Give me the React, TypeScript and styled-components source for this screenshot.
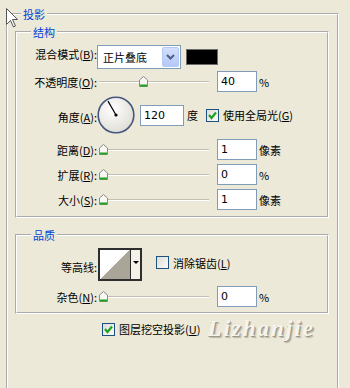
import styled, { createGlobalStyle } from 'styled-components';

const GlobalStyle = createGlobalStyle`
  html, body {
    margin: 0;
    padding: 0;
  }
  body {
    background: #ece9d8;
    font-family: "Noto Sans CJK SC", "DejaVu Sans", sans-serif;
    font-size: 11px;
    color: #000;
  }
`;

function Check({ checked }: { checked?: boolean }) {
  return (
    <CheckBox>
      {checked && (
        <svg width="11" height="11" viewBox="0 0 11 11">
          <polyline points="2,5 4.5,8 9,2.5" fill="none" stroke="#21a121" strokeWidth="2.2" />
        </svg>
      )}
    </CheckBox>
  );
}

function Slider({ value }: { value: number }) {
  return (
    <SliderWrap>
      <Track />
      <Thumb style={{ left: `calc((100% - 9px) * ${value})` }}>
        <svg width="9" height="11" viewBox="0 0 9 11">
          <path d="M4.5 0.5 L8.5 4 L8.5 10.5 L0.5 10.5 L0.5 4 Z" fill="#f7f7f4" stroke="#8a8a8a" />
          <rect x="1" y="8.5" width="7" height="2" fill="#21a121" />
        </svg>
      </Thumb>
    </SliderWrap>
  );
}

function AngleDial({ angle }: { angle: number }) {
  const r = (angle * Math.PI) / 180;
  const x = 19 + 16 * Math.cos(r);
  const y = 19 - 16 * Math.sin(r);
  return (
    <svg width="38" height="38" viewBox="0 0 38 38">
      <defs>
        <radialGradient id="dialFill" cx="40%" cy="35%" r="70%">
          <stop offset="0%" stopColor="#ffffff" />
          <stop offset="100%" stopColor="#dedcd4" />
        </radialGradient>
      </defs>
      <circle cx="19" cy="19" r="17.8" fill="url(#dialFill)" stroke="#45557d" strokeWidth="1.6" />
      <line x1="19" y1="19" x2={x} y2={y} stroke="#000" strokeWidth="1.2" />
      <circle cx="19" cy="19" r="1.6" fill="#000" />
    </svg>
  );
}

export default function App() {
  return (
    <>
      <GlobalStyle />
      <Page>
        <OuterGroup>
          <Legend $indent={6}>投影</Legend>
          <Section $top={4} $bottom={6}>
            <Legend $indent={10}>结构</Legend>
            <Row $h={26}>
              <Label $lift={6}>混合模式(<u>B</u>):</Label>
              <Combo>
                <ComboText>正片叠底</ComboText>
                <ComboButton>
                  <svg width="9" height="6" viewBox="0 0 9 6">
                    <polyline points="1,1 4.5,4.5 8,1" fill="none" stroke="#4d6185" strokeWidth="2" />
                  </svg>
                </ComboButton>
              </Combo>
              <Swatch />
            </Row>
            <Row $h={21} $gap={1}>
              <Label>不透明度(<u>O</u>):</Label>
              <Slider value={0.4} />
              <Field>40</Field>
              <Unit>%</Unit>
            </Row>
            <Row $h={40} $gap={3}>
              <Label $lift={-3}>角度(<u>A</u>):</Label>
              <AngleDial angle={120} />
              <Field $w={44} $ml={5}>120</Field>
              <Unit $ml={3}>度</Unit>
              <CheckLabel $ml={8}>
                <Check checked />
                <span>使用全局光(<u>G</u>)</span>
              </CheckLabel>
            </Row>
            <Row $h={21} $gap={4}>
              <Label>距离(<u>D</u>):</Label>
              <Slider value={0} />
              <Field>1</Field>
              <Unit>像素</Unit>
            </Row>
            <Row $h={21} $gap={4}>
              <Label>扩展(<u>R</u>):</Label>
              <Slider value={0} />
              <Field>0</Field>
              <Unit>%</Unit>
            </Row>
            <Row $h={21} $gap={4}>
              <Label>大小(<u>S</u>):</Label>
              <Slider value={0} />
              <Field>1</Field>
              <Unit>像素</Unit>
            </Row>
          </Section>

          <Section $top={5} $bottom={5} $gap={9}>
            <Legend $indent={10}>品质</Legend>
            <Row $h={33}>
              <Label $lift={-5}>等高线:</Label>
              <ContourBox>
                <ContourPreview />
                <ContourButton>
                  <Arrow />
                </ContourButton>
              </ContourBox>
              <CheckLabel $ml={14} $lift={4}>
                <Check />
                <span>消除锯齿(<u>L</u>)</span>
              </CheckLabel>
            </Row>
            <Row $h={21} $gap={5}>
              <Label>杂色(<u>N</u>):</Label>
              <Slider value={0} />
              <Field>0</Field>
              <Unit>%</Unit>
            </Row>
          </Section>

          <BottomRow>
            <CheckLabel>
              <Check checked />
              <span>图层挖空投影(<u>U</u>)</span>
            </CheckLabel>
            <Watermark>Lizhanjie</Watermark>
          </BottomRow>
        </OuterGroup>

        <Cursor width="13" height="20" viewBox="0 0 13 20">
          <path d="M0.5 0.5 L0.5 16.5 L4.5 12.5 L7.5 19 L9.5 18 L6.5 11.5 L11.5 11.5 Z" fill="#fff" stroke="#555" strokeWidth="1" />
        </Cursor>
      </Page>
    </>
  );
}

const Page = styled.div`
  position: relative;
  width: 350px;
  height: 388px;
  overflow: hidden;
  box-sizing: border-box;
  padding: 6px 0 0 6px;
  background: #ece9d8;
`;

const OuterGroup = styled.fieldset`
  margin: 0;
  min-width: 0;
  width: 333px;
  height: 430px;
  box-sizing: border-box;
  border: 2px groove #fff;
  padding: 2px 8px 0 7px;
`;

const Section = styled.fieldset<{ $top: number; $bottom: number; $gap?: number }>`
  margin: ${(p) => p.$gap ?? 0}px 0 0 0;
  min-width: 0;
  box-sizing: border-box;
  border: 2px groove #fff;
  padding: ${(p) => p.$top}px 4px ${(p) => p.$bottom}px 4px;
`;

const Legend = styled.legend<{ $indent: number }>`
  margin-left: ${(p) => p.$indent}px;
  padding: 0 2px;
  line-height: 16px;
  font-size: 11px;
  color: #0046d5;
`;

const Row = styled.div<{ $h: number; $gap?: number }>`
  display: flex;
  align-items: center;
  height: ${(p) => p.$h}px;
  margin-top: ${(p) => p.$gap ?? 0}px;
`;

const Label = styled.div<{ $lift?: number }>`
  flex: none;
  width: 76px;
  text-align: right;
  white-space: nowrap;
  line-height: 14px;
  margin-bottom: ${(p) => p.$lift ?? 0}px;
`;

const Combo = styled.div`
  flex: none;
  display: flex;
  align-items: stretch;
  width: 84px;
  height: 24px;
  box-sizing: border-box;
  border: 1px solid #7f9db9;
  background: #fff;
  padding: 1px;
`;

const ComboText = styled.div`
  flex: 1;
  padding-left: 4px;
  line-height: 20px;
`;

const ComboButton = styled.div`
  width: 17px;
  display: flex;
  align-items: center;
  justify-content: center;
  border-radius: 2px;
  border: 1px solid #b6c9f4;
  box-sizing: border-box;
  background: linear-gradient(180deg, #d2dffc 0%, #b5c8f7 100%);
`;

const Swatch = styled.div`
  flex: none;
  width: 32px;
  height: 16px;
  margin-left: 5px;
  box-sizing: border-box;
  border: 1px solid #6b6b6b;
  background: #000;
`;

const SliderWrap = styled.div`
  position: relative;
  flex: none;
  width: 110px;
  height: 21px;
  margin-left: 2px;
  display: flex;
  align-items: center;
`;

const Track = styled.div`
  flex: 1;
  height: 0;
  border-top: 1px solid #c2bfb1;
  border-bottom: 1px solid #fff;
`;

const Thumb = styled.div`
  position: absolute;
  top: 5px;
  width: 9px;
  height: 11px;
  line-height: 0;
`;

const Field = styled.div<{ $w?: number; $ml?: number }>`
  flex: none;
  width: ${(p) => p.$w ?? 40}px;
  height: 21px;
  margin-left: ${(p) => p.$ml ?? 8}px;
  box-sizing: border-box;
  border: 1px solid #7f9db9;
  background: #fff;
  padding-left: 3px;
  line-height: 19px;
  font-family: "DejaVu Sans", sans-serif;
  font-size: 11px;
`;

const Unit = styled.div<{ $ml?: number }>`
  flex: none;
  margin-left: ${(p) => p.$ml ?? 2}px;
  white-space: nowrap;
`;

const CheckLabel = styled.div<{ $ml?: number; $lift?: number }>`
  display: flex;
  align-items: center;
  gap: 4px;
  margin-left: ${(p) => p.$ml ?? 0}px;
  margin-bottom: ${(p) => p.$lift ?? 0}px;
  white-space: nowrap;
`;

const CheckBox = styled.div`
  flex: none;
  width: 13px;
  height: 13px;
  box-sizing: border-box;
  border: 1px solid #1c5180;
  background: linear-gradient(135deg, #dcdcd7 0%, #fbfbf9 100%);
  display: flex;
  align-items: center;
  justify-content: center;
`;

const ContourBox = styled.div`
  flex: none;
  display: flex;
  width: 44px;
  height: 33px;
  margin-left: 1px;
  box-sizing: border-box;
  border: 2px solid #2e2e2e;
`;

const ContourPreview = styled.div`
  flex: 1;
  background: linear-gradient(to top left, #a9a599 50%, #ffffff 50%);
`;

const ContourButton = styled.div`
  width: 10px;
  border-left: 1px solid #2e2e2e;
  background: #f3f1e8;
  display: flex;
  justify-content: center;
  padding-top: 11px;
  box-sizing: border-box;
`;

const Arrow = styled.div`
  width: 0;
  height: 0;
  border-left: 3px solid transparent;
  border-right: 3px solid transparent;
  border-top: 3px solid #000;
`;

const BottomRow = styled.div`
  display: flex;
  align-items: center;
  height: 24px;
  margin-top: 3px;
  padding-left: 87px;
`;

const Watermark = styled.div`
  margin-left: 7px;
  font-family: "Liberation Serif", serif;
  font-style: italic;
  font-weight: bold;
  font-size: 23px;
  letter-spacing: 2px;
  color: #f6f4ec;
  text-shadow: 1px 1px 0 #9c998d, 2px 2px 1px #b9b6aa;
`;

const Cursor = styled.svg`
  position: absolute;
  left: 6px;
  top: 8px;
`;
